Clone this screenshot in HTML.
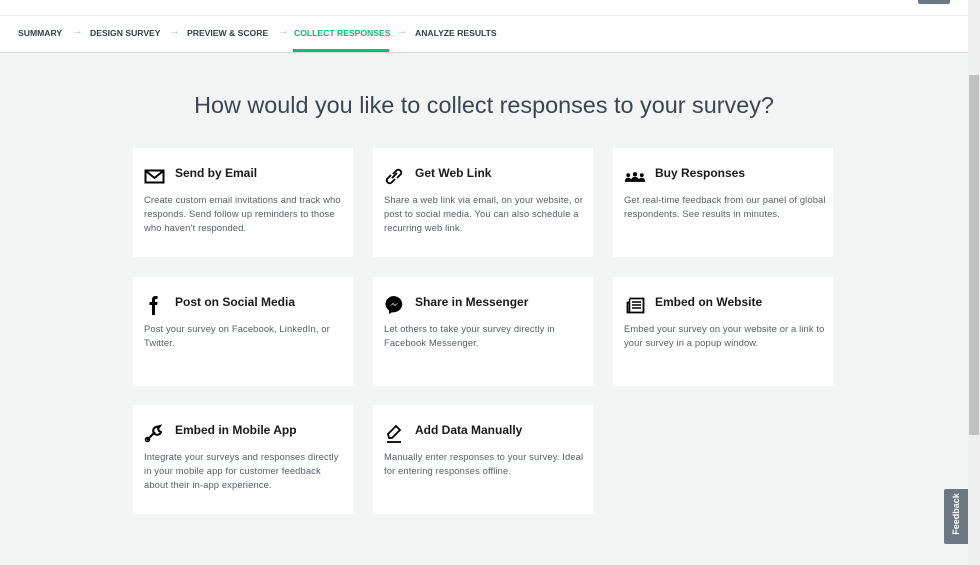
<!DOCTYPE html>
<html><head><style>
*{margin:0;padding:0;box-sizing:border-box}
body{width:980px;height:565px;overflow:hidden;background:#f3f4f4;font-family:"Liberation Sans",sans-serif;position:relative}
.top{position:absolute;left:0;top:0;width:968px;height:16px;background:#fff;border-bottom:1px solid #eceeee}
.btn{position:absolute;left:918px;top:0;width:32px;height:4px;background:#6b7882;border-radius:0 0 2px 2px}
.nav{position:absolute;left:0;top:16px;width:968px;height:37px;background:#fff;border-bottom:1px solid #d6d9db}
.nav span{position:absolute;top:12px;font-size:8.6px;font-weight:bold;color:#333e48;white-space:nowrap}
.nav .ar{color:#b5bbbf;font-weight:normal;font-size:11px;top:9px}
.nav .on{color:#00bf6f}
.ul{position:absolute;left:293px;top:49px;width:96px;height:3px;background:#00bf6f}
h1{position:absolute;left:0;width:968px;top:92px;text-align:center;font-weight:normal;font-size:23.4px;color:#3b4651}
.c{position:absolute;width:220px;height:109px;background:#fff}
.c .ic{position:absolute;left:11px;top:18px;width:22px;height:20px}
.c b{position:absolute;left:42px;top:18px;font-size:12px;color:#1a1a1a}
.c p{position:absolute;left:11px;top:45px;width:203px;font-size:9.4px;letter-spacing:.12px;line-height:14px;color:#555f69}
.sb{position:absolute;left:968px;top:0;width:12px;height:565px;background:#f0f0f0}
.th{position:absolute;left:969px;top:75px;width:10px;height:360px;background:#c1c1c1}
.fb{position:absolute;left:944px;top:489px;width:24px;height:55px;background:#6b7882;border-radius:2px 0 0 2px}
.fb span{position:absolute;left:-12px;top:20px;transform:rotate(-90deg);color:#fff;font-size:9px;font-weight:bold;width:48px;text-align:center}
</style></head><body>
<div class="top"></div><div class="btn"></div>
<div class="nav">
<span style="left:18px">SUMMARY</span><span class="ar" style="left:72px">→</span>
<span style="left:90px">DESIGN SURVEY</span><span class="ar" style="left:169px">→</span>
<span style="left:187px">PREVIEW &amp; SCORE</span><span class="ar" style="left:278px">→</span>
<span class="on" style="left:294px">COLLECT RESPONSES</span><span class="ar" style="left:397px">→</span>
<span style="left:415px">ANALYZE RESULTS</span>
</div><div class="ul"></div>
<h1>How would you like to collect responses to your survey?</h1>

<div class="c" style="left:133px;top:148px"><svg class="ic" viewBox="0 0 22 20"><rect x="1.5" y="4.5" width="18" height="12" fill="none" stroke="#000" stroke-width="2"/><path d="M2 5l8.5 7 8.5-7" fill="none" stroke="#000" stroke-width="2"/></svg><b>Send by Email</b><p>Create custom email invitations and track who responds. Send follow up reminders to those who haven’t responded.</p></div>
<div class="c" style="left:373px;top:148px"><svg class="ic" viewBox="0 0 22 20"><path d="M9 8l4-4a3 3 0 014 4l-4 4M11 13l-4 4a3 3 0 01-4-4l4-4M8 12l5-5" fill="none" stroke="#000" stroke-width="1.8"/></svg><b>Get Web Link</b><p>Share a web link via email, on your website, or post to social media. You can also schedule a recurring web link.</p></div>
<div class="c" style="left:613px;top:148px"><svg class="ic" viewBox="0 0 26 20"><circle cx="5" cy="9" r="2.3"/><circle cx="13" cy="8" r="2.6"/><circle cx="21" cy="9" r="2.3"/><path d="M1 17q0-5 4-5t4 5zM8 17q0-6 5-6t5 6zM17 17q0-5 4-5t4 5z"/></svg><b>Buy Responses</b><p>Get real-time feedback from our panel of global respondents. See results in minutes.</p></div>

<div class="c" style="left:133px;top:277px"><svg class="ic" viewBox="0 0 22 20"><path d="M8 20V10H5.5V7H8V4.5Q8 1 11.5 1H13.5v3H12q-1 0-1 1V7h2.6l-.4 3H11v10z"/></svg><b>Post on Social Media</b><p>Post your survey on Facebook, LinkedIn, or Twitter.</p></div>
<div class="c" style="left:373px;top:277px"><svg class="ic" viewBox="0 0 22 20"><path d="M10 1a8.5 8 0 00-5 14.5V19l3-1.7A9 8 0 1010 1z"/><path d="M5 12l4-4 2 2 4-3-4 4-2-2z" fill="#fff"/></svg><b>Share in Messenger</b><p>Let others to take your survey directly in Facebook Messenger.</p></div>
<div class="c" style="left:613px;top:277px"><svg class="ic" viewBox="0 0 22 20"><path d="M5.5 3.5h14v14h-16v-10h2" fill="none" stroke="#000" stroke-width="1.8"/><path d="M5.5 4v13.5M8 7h9M8 10h9M8 13h9" stroke="#000" stroke-width="1.5"/></svg><b>Embed on Website</b><p>Embed your survey on your website or a link to your survey in a popup window.</p></div>

<div class="c" style="left:133px;top:405px"><svg class="ic" viewBox="0 0 22 20"><path d="M3 17l8-8M12 4a4 4 0 105 5l-2-1-1-2 2-3z" fill="none" stroke="#000" stroke-width="2"/><circle cx="3.5" cy="16.5" r="2" fill="none" stroke="#000" stroke-width="1.5"/></svg><b>Embed in Mobile App</b><p>Integrate your surveys and responses directly in your mobile app for customer feedback about their in-app experience.</p></div>
<div class="c" style="left:373px;top:405px"><svg class="ic" viewBox="0 0 22 20"><path d="M5 15l-1-4 8-8 4 4-8 8z" fill="none" stroke="#000" stroke-width="1.8"/><path d="M3 19h14" stroke="#000" stroke-width="1.8"/></svg><b>Add Data Manually</b><p>Manually enter responses to your survey. Ideal for entering responses offline.</p></div>

<div class="sb"></div><div class="th"></div>
<div class="fb"><span>Feedback</span></div>
</body></html>
